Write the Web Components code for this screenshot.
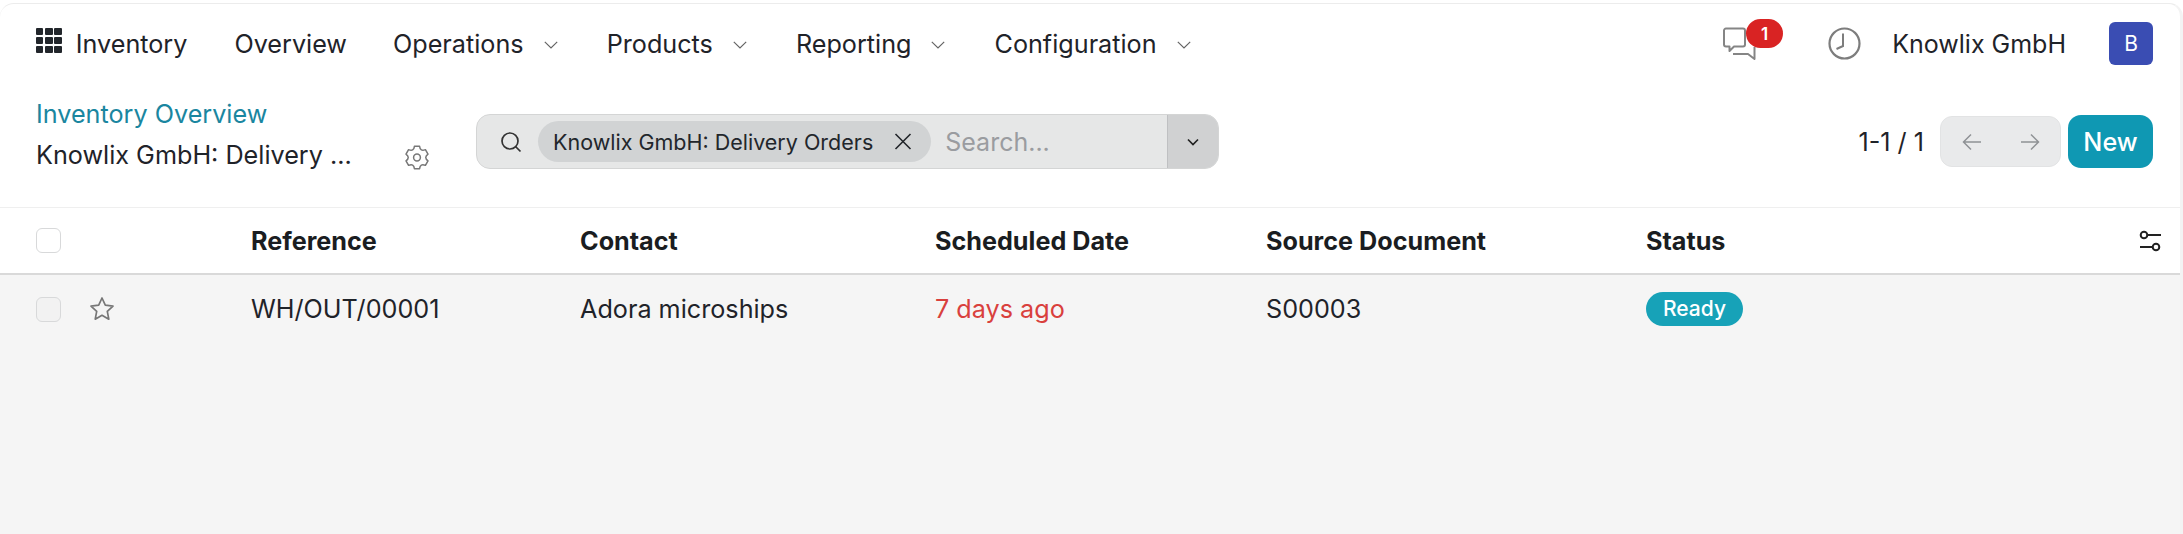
<!DOCTYPE html>
<html lang="en">
<head>
<meta charset="utf-8">
<title>Inventory</title>
<style>
  html, body { margin: 0; height: 100%; background: #fff; }
  body { font-family: Inter, "Noto Sans", sans-serif; color: #1f2329; overflow: hidden; }
  inv-app { height: 100vh; }
</style>
</head>
<body>
<inv-app>
  <inv-navbar></inv-navbar>
  <inv-control></inv-control>
  <inv-list></inv-list>
</inv-app>

<script>
const CHEVRON = `<svg width="14" height="14" viewBox="0 0 14 14" fill="none" stroke="currentColor" stroke-width="1.2"><path d="M.8 3.800 7 10l6.200-6.200"/></svg>`

// engrenagem de seis lobos, com a ponta para cima
function gearPath(cx, cy, outer, inner) {
  const pt = (deg, r) => {
    const a = deg * Math.PI / 180
    return `${(cx + r * Math.cos(a)).toFixed(2)} ${(cy + r * Math.sin(a)).toFixed(2)}`
  }
  let d = ''
  for (let i = 0; i < 6; i++) {
    const a = -90 + i * 60
    d += `${i ? 'L' : 'M'}${pt(a - 13, outer)} L${pt(a + 13, outer)} Q${pt(a + 30, inner)} ${pt(a + 47, outer)} `
  }
  return d + 'Z'
}

class InvApp extends HTMLElement {
  constructor() {
    super()
    this.attachShadow({ mode: 'open' })
    this.shadowRoot.innerHTML = `
      <style>
        :host { display: block; background: #fff; padding-top: 3px; box-sizing: border-box; }
        .card {
          height: 100%;
          border-top: 1px solid #ececec;
          border-right: 3px solid #f3f3f3;
          border-radius: 14px 14px 0 0;
          background: #fff;
          display: flex;
          flex-direction: column;
          overflow: hidden;
          box-sizing: border-box;
        }
      </style>
      <div class="card"><slot></slot></div>
    `
  }
}

class InvNavbar extends HTMLElement {
  constructor() {
    super()
    this.attachShadow({ mode: 'open' })
    const menus = ['Operations', 'Products', 'Reporting', 'Configuration']
    this.shadowRoot.innerHTML = `
      <style>
        :host { display: flex; align-items: center; height: 79px; padding: 0 27px 0 36px; font-size: 25.200px; color: #1f2329; flex: none; white-space: nowrap; }
        .grid { display: grid; grid-template-columns: repeat(3, 7.400px); grid-auto-rows: 7.400px; gap: 1.800px; margin-right: 14px; margin-top: -6px; }
        .grid i { background: #22262b; border-radius: 1px; }
        .item { display: flex; align-items: center; }
        .brand { margin-right: 47px; }
        .over { margin-right: 46px; }
        .m svg { margin-left: 20px; color: #666; margin-top: 2px; }
        .m { margin-right: 49px; }
        .right { margin-left: auto; display: flex; align-items: center; }
        .chat { position: relative; width: 33px; height: 33px; color: #858585; margin-right: 72px; }
        .badge { position: absolute; left: 23px; top: -8px; width: 37px; height: 29px; border-radius: 15px; background: #d92323; color: #fff; font-size: 17px; font-weight: 600; display: flex; align-items: center; justify-content: center; }
        .clock { color: #7d7d7d; margin-right: 31px; display: flex; }
        .company { font-size: 25px; }
        .avatar { width: 44px; height: 43px; border-radius: 6px; background: #3a4db3; color: #fff; font-size: 21px; display: flex; align-items: center; justify-content: center; margin-left: 43px; }
      </style>
      <span class="grid">${'<i></i>'.repeat(9)}</span>
      <span class="item brand">Inventory</span>
      <span class="item over">Overview</span>
      ${menus.map(m => `<span class="item m">${m}${CHEVRON}</span>`).join('')}
      <div class="right">
        <span class="chat">
          <svg width="33" height="33" viewBox="0 0 33 33" fill="none" stroke="currentColor" stroke-width="2" stroke-linejoin="round">
            <path d="M3 1.500h17a2 2 0 0 1 2 2v14a2 2 0 0 1-2 2H11l-4.500 4.500v-4.500H3a2 2 0 0 1-2-2v-14a2 2 0 0 1 2-2z"/>
            <path d="M10 27h15l6.500 5v-5.500V20"/>
          </svg>
          <span class="badge">1</span>
        </span>
        <span class="clock">
          <svg width="33" height="33" viewBox="0 0 33 33" fill="none" stroke="currentColor" stroke-width="2.200"><circle cx="16.500" cy="16.500" r="15"/><path d="M15 6.500v12.500l-6.500 3" stroke-width="2"/></svg>
        </span>
        <span class="company">Knowlix GmbH</span>
        <span class="avatar">B</span>
      </div>
    `
  }
}

class InvSearch extends HTMLElement {
  constructor() {
    super()
    this.attachShadow({ mode: 'open' })
    this.shadowRoot.innerHTML = `
      <style>
        :host { display: flex; width: 743px; height: 55px; box-sizing: border-box; border: 1px solid #d4d5d5; border-radius: 14px; background: #e6e7e7; overflow: hidden; }
        .main { flex: 1; display: flex; align-items: center; padding-left: 23px; min-width: 0; }
        .icon { color: #333; display: flex; margin-right: 16px; }
        .chip { display: flex; align-items: center; height: 41px; box-sizing: border-box; border-radius: 21px; background: #d1d3d4; padding: 0 19px 0 15px; font-size: 21.500px; color: #22262b; white-space: nowrap; }
        .chip svg { margin-left: 21px; }
        .ph { color: #9a9ca0; font-size: 25px; margin-left: 14px; }
        .drop { width: 50px; background: #d0d1d2; border-left: 1px solid #bfc0c2; display: flex; align-items: center; justify-content: center; color: #222; }
      </style>
      <div class="main">
        <span class="icon"><svg width="22" height="22" viewBox="0 0 22 22" fill="none" stroke="currentColor" stroke-width="1.700"><circle cx="10" cy="10" r="8"/><path d="m15.500 15.500 5 5"/></svg></span>
        <span class="chip"><slot></slot><svg width="18" height="17" viewBox="0 0 18 17" fill="none" stroke="currentColor" stroke-width="1.600"><path d="M1.500 1 16.500 16M16.500 1 1.500 16"/></svg></span>
        <span class="ph">Search...</span>
      </div>
      <div class="drop"><svg width="14" height="14" viewBox="0 0 14 14" fill="none" stroke="currentColor" stroke-width="1.700"><path d="M2 4.500 7 9.500 12 4.500"/></svg></div>
    `
  }
}

class InvControl extends HTMLElement {
  constructor() {
    super()
    this.attachShadow({ mode: 'open' })
    this.shadowRoot.innerHTML = `
      <style>
        :host { display: flex; align-items: flex-start; height: 124px; padding: 12px 27px 0 36px; box-sizing: border-box; flex: none; }
        .crumbs { width: 369px; display: flex; flex-direction: column; gap: 11px; font-size: 25.200px; line-height: 30px; flex: none; padding-top: 4px; }
        .crumbs a { color: #1a86a0; }
        .crumbs span { color: #1f2329; white-space: nowrap; }
        .gear { padding-top: 50px; margin-right: 47px; color: #777; flex: none; display: flex; }
        inv-search { margin-top: 19px; flex: none; }
        .right { margin-left: auto; display: flex; align-items: center; margin-top: 19px; height: 55px; }
        .count { font-size: 25.200px; margin-right: 16px; }
        .pager { display: flex; width: 121px; height: 51px; border: 1px solid #e2e3e4; border-radius: 12px; background: #e9eaeb; box-sizing: border-box; color: #8f9295; align-items: center; justify-content: center; gap: 38px; margin-right: 7px; }
        .new { width: 85px; height: 53px; border-radius: 13px; background: #0f98b3; color: #fff; font-size: 25.200px; font-weight: 500; display: flex; align-items: center; justify-content: center; }
      </style>
      <div class="crumbs"><a>Inventory Overview</a><span>Knowlix GmbH: Delivery ...</span></div>
      <span class="gear">
        <svg width="24" height="25" viewBox="0 0 24 25" fill="none" stroke="currentColor" stroke-width="1.500" stroke-linejoin="round">
          <path d="${gearPath(12, 12.5, 11.5, 6.5)}"/>
          <circle cx="12" cy="12.500" r="3.400"/>
        </svg>
      </span>
      <inv-search>Knowlix GmbH: Delivery Orders</inv-search>
      <div class="right">
        <span class="count">1-1 / 1</span>
        <span class="pager">
          <svg width="20" height="18" viewBox="0 0 20 18" fill="none" stroke="currentColor" stroke-width="1.500"><path d="M19 9H1.500M9 1.500 1.500 9 9 16.500"/></svg>
          <svg width="20" height="18" viewBox="0 0 20 18" fill="none" stroke="currentColor" stroke-width="1.500"><path d="M1 9h17.500M11 1.500 18.500 9 11 16.500"/></svg>
        </span>
        <span class="new">New</span>
      </div>
    `
  }
}

class InvList extends HTMLElement {
  constructor() {
    super()
    this.attachShadow({ mode: 'open' })
    const cols = '53px 162px 329px 355px 331px 380px 493px 1fr'
    this.shadowRoot.innerHTML = `
      <style>
        :host { display: block; flex: 1; background: #f5f5f5; font-size: 25.200px; color: #1f2329; }
        .row { display: grid; grid-template-columns: ${cols}; align-items: center; padding-left: 36px; box-sizing: border-box; white-space: nowrap; }
        .head { background: #fff; border-top: 1px solid #efefef; border-bottom: 2px solid #d9d9d9; font-weight: 700; font-size: 25.200px; color: #1a1d21; height: 65px; box-sizing: content-box; }
        .body { height: 68px; }
        .cb { width: 25px; height: 25px; border: 1px solid #d8d9da; border-radius: 6px; background: #fff; box-sizing: border-box; }
        .body .cb { background: #f2f2f2; }
        .late { color: #d9403d; }
        .badge { display: inline-flex; align-items: center; justify-content: center; width: 97px; height: 34px; border-radius: 17px; background: #17a2b8; color: #fff; font-size: 21px; font-weight: 500; box-sizing: border-box; margin-top: -5px; }
        svg { display: block; }
      </style>
      <div class="row head">
        <span class="cb"></span><span></span>
        <span>Reference</span><span>Contact</span><span>Scheduled Date</span><span>Source Document</span><span>Status</span>
        <svg width="24" height="24" viewBox="0 0 24 24" fill="none" stroke="#222" stroke-width="2"><path d="M8 6h14M1 18h13"/><circle cx="5" cy="6" r="3.300"/><circle cx="17" cy="18" r="3.300"/></svg>
      </div>
      <div class="row body">
        <span class="cb"></span>
        <svg width="26" height="26" viewBox="0 0 26 26" fill="none" stroke="#777" stroke-width="1.700" stroke-linejoin="round"><path d="m13 2 3.300 7.200 7.700.9-5.700 5.300 1.500 7.800L13 19.300l-6.800 3.900 1.500-7.800L2 10.100l7.700-.9z"/></svg>
        <span>WH/OUT/00001</span><span>Adora microships</span><span class="late">7 days ago</span><span>S00003</span>
        <span><span class="badge">Ready</span></span>
      </div>
    `
  }
}

customElements.define('inv-app', InvApp)
customElements.define('inv-navbar', InvNavbar)
customElements.define('inv-search', InvSearch)
customElements.define('inv-control', InvControl)
customElements.define('inv-list', InvList)
</script>
</body>
</html>
